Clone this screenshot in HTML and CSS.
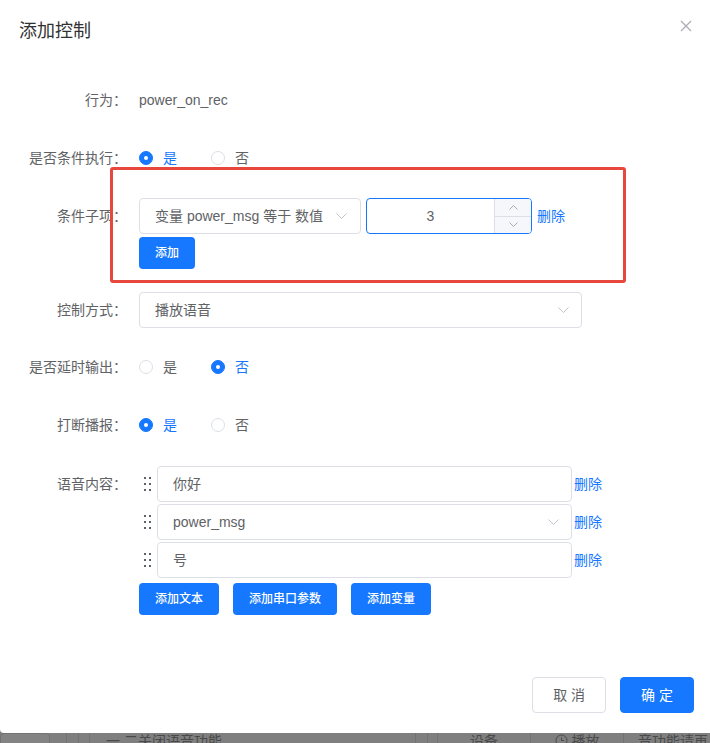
FILE: index.html
```html
<!DOCTYPE html>
<html lang="zh-CN">
<head>
<meta charset="utf-8">
<title>添加控制</title>
<link rel="stylesheet" href="styles.css">
</head>
<body>
<div class="dialog">
  <header class="dlg-header">
    <span class="dlg-title">添加控制</span>
    <span class="dlg-close">
      <svg width="12" height="12" viewBox="0 0 12 12"><path d="M1 1L11 11M11 1L1 11" stroke="#a8abb2" stroke-width="1.2" fill="none"/></svg>
    </span>
  </header>

  <div class="dlg-body">
    <div class="form-item">
      <label class="form-label">行为：</label>
      <div class="form-content"><span class="plain">power_on_rec</span></div>
    </div>

    <div class="form-item">
      <label class="form-label">是否条件执行：</label>
      <div class="radio-group">
        <span class="radio checked"><span class="radio-dot"></span><span class="radio-text">是</span></span>
        <span class="radio"><span class="radio-dot"></span><span class="radio-text">否</span></span>
      </div>
    </div>

    <div class="form-item item-cond">
      <label class="form-label">条件子项：</label>
      <div class="form-content">
        <div class="cond-line">
          <div class="select select-cond">变量 power_msg 等于 数值
            <svg class="select-arrow" width="11" height="6" viewBox="0 0 11 6"><path d="M0.5 0.5L5.5 5.5L10.5 0.5" stroke="#c0c4cc" stroke-width="1" fill="none"/></svg>
          </div>
          <div class="num">
            <span class="num-value">3</span>
            <span class="num-ctrl">
              <span class="num-up"><svg width="9" height="5" viewBox="0 0 9 5"><path d="M0.5 4.5L4.5 0.5L8.5 4.5" stroke="#a8abb2" stroke-width="1" fill="none"/></svg></span>
              <span class="num-down"><svg width="9" height="5" viewBox="0 0 9 5"><path d="M0.5 0.5L4.5 4.5L8.5 0.5" stroke="#a8abb2" stroke-width="1" fill="none"/></svg></span>
            </span>
          </div>
          <a class="link link-cond">删除</a>
        </div>
        <button class="btn-sm cond-add">添加</button>
      </div>
    </div>

    <div class="form-item item-mode">
      <label class="form-label">控制方式：</label>
      <div class="form-content">
        <div class="select select-wide">播放语音
          <svg class="select-arrow" width="11" height="6" viewBox="0 0 11 6"><path d="M0.5 0.5L5.5 5.5L10.5 0.5" stroke="#c0c4cc" stroke-width="1" fill="none"/></svg>
        </div>
      </div>
    </div>

    <div class="form-item">
      <label class="form-label">是否延时输出：</label>
      <div class="radio-group">
        <span class="radio"><span class="radio-dot"></span><span class="radio-text">是</span></span>
        <span class="radio checked"><span class="radio-dot"></span><span class="radio-text">否</span></span>
      </div>
    </div>

    <div class="form-item item-break">
      <label class="form-label">打断播报：</label>
      <div class="radio-group">
        <span class="radio checked"><span class="radio-dot"></span><span class="radio-text">是</span></span>
        <span class="radio"><span class="radio-dot"></span><span class="radio-text">否</span></span>
      </div>
    </div>

    <div class="form-item">
      <label class="form-label">语音内容：</label>
      <div class="form-content">
        <div class="voice-list">
          <div class="voice-row">
            <span class="handle"><svg width="7" height="14" viewBox="0 0 7 14"><g fill="#5f6266"><rect x="0" y="0" width="2" height="2"/><rect x="5" y="0" width="2" height="2"/><rect x="0" y="6" width="2" height="2"/><rect x="5" y="6" width="2" height="2"/><rect x="0" y="12" width="2" height="2"/><rect x="5" y="12" width="2" height="2"/></g></svg></span>
            <div class="voice-input">你好</div>
            <a class="link link-voice">删除</a>
          </div>
          <div class="voice-row">
            <span class="handle"><svg width="7" height="14" viewBox="0 0 7 14"><g fill="#5f6266"><rect x="0" y="0" width="2" height="2"/><rect x="5" y="0" width="2" height="2"/><rect x="0" y="6" width="2" height="2"/><rect x="5" y="6" width="2" height="2"/><rect x="0" y="12" width="2" height="2"/><rect x="5" y="12" width="2" height="2"/></g></svg></span>
            <div class="voice-input select">power_msg
              <svg class="select-arrow" width="11" height="6" viewBox="0 0 11 6"><path d="M0.5 0.5L5.5 5.5L10.5 0.5" stroke="#c0c4cc" stroke-width="1" fill="none"/></svg>
            </div>
            <a class="link link-voice">删除</a>
          </div>
          <div class="voice-row">
            <span class="handle"><svg width="7" height="14" viewBox="0 0 7 14"><g fill="#5f6266"><rect x="0" y="0" width="2" height="2"/><rect x="5" y="0" width="2" height="2"/><rect x="0" y="6" width="2" height="2"/><rect x="5" y="6" width="2" height="2"/><rect x="0" y="12" width="2" height="2"/><rect x="5" y="12" width="2" height="2"/></g></svg></span>
            <div class="voice-input">号</div>
            <a class="link link-voice">删除</a>
          </div>
        </div>
        <div class="voice-actions">
          <button class="btn-sm">添加文本</button>
          <button class="btn-sm">添加串口参数</button>
          <button class="btn-sm">添加变量</button>
        </div>
      </div>
    </div>
  </div>

  <footer class="dlg-footer">
    <button class="btn btn-default">取 消</button>
    <button class="btn btn-primary">确 定</button>
  </footer>

  <div class="annot-box"></div>
</div>

<div class="mask-strip">
  <div class="cell cell-a"><div class="ghost-box"></div></div>
  <div class="cell cell-b"></div>
  <div class="cell cell-c"></div>
  <div class="cell cell-d">一 二关闭语音功能</div>
  <div class="cell cell-e"></div>
  <div class="cell cell-f"></div>
  <div class="cell cell-g">设备</div>
  <div class="cell cell-h"><svg width="13" height="13" viewBox="0 0 13 13"><circle cx="6.5" cy="6.5" r="5.5" stroke="#4a4a4a" fill="none"/><path d="M6.5 3.5V6.5H9" stroke="#4a4a4a" fill="none"/></svg> 播放</div>
  <div class="cell cell-i">音功能请再</div>
</div>
</body>
</html>
```

FILE: styles.css
```css
* {
  box-sizing: border-box;
}

html,
body {
  margin: 0;
  padding: 0;
}

body {
  width: 710px;
  height: 743px;
  overflow: hidden;
  background: #7f7f7f;
  font-family: "Liberation Sans", "Noto Sans CJK SC", sans-serif;
}

.dialog {
  position: relative;
  width: 710px;
  height: 733px;
  background: #ffffff;
  border-bottom-left-radius: 4px;
  display: flex;
  flex-direction: column;
}

.dlg-header {
  display: flex;
  justify-content: space-between;
  align-items: flex-start;
  padding: 19px 18px 0 19px;
  height: 43px;
}

.dlg-title {
  font-size: 18px;
  line-height: 24px;
  color: #303133;
}

.dlg-close {
  display: block;
  width: 12px;
  height: 12px;
  margin-top: 1px;
}

.dlg-close svg {
  display: block;
}

.dlg-body {
  flex: 1;
  padding-top: 39px;
}

.form-item {
  display: flex;
  align-items: flex-start;
  margin-bottom: 22px;
}

.item-cond {
  margin-bottom: 23px;
}

.item-mode {
  margin-bottom: 21px;
}

.item-break {
  margin-bottom: 23px;
}

.form-label {
  flex: none;
  width: 139px;
  padding-right: 12px;
  text-align: right;
  font-size: 14px;
  line-height: 36px;
  color: #606266;
}

.form-content {
  font-size: 14px;
  line-height: 36px;
  color: #606266;
}

.plain {
  color: #606266;
}

/* radios */
.radio-group {
  display: flex;
  align-items: center;
  height: 36px;
}

.radio {
  display: flex;
  align-items: center;
  margin-right: 34px;
}

.radio-dot {
  position: relative;
  width: 14px;
  height: 14px;
  border: 1px solid #dcdfe6;
  border-radius: 50%;
  background: #ffffff;
  margin-right: 10px;
}

.radio.checked .radio-dot {
  background: #1677ff;
  border-color: #1677ff;
}

.radio.checked .radio-dot::after {
  content: "";
  position: absolute;
  left: 50%;
  top: 50%;
  width: 4px;
  height: 4px;
  margin: -2px 0 0 -2px;
  border-radius: 50%;
  background: #ffffff;
}

.radio-text {
  font-size: 14px;
  line-height: 20px;
  color: #606266;
}

.radio.checked .radio-text {
  color: #1677ff;
}

/* selects / inputs */
.select {
  position: relative;
  height: 36px;
  border: 1px solid #dcdfe6;
  border-radius: 4px;
  padding: 0 30px 0 15px;
  line-height: 34px;
  font-size: 14px;
  color: #606266;
  background: #ffffff;
}

.select-arrow {
  position: absolute;
  right: 12px;
  top: 50%;
  margin-top: -3px;
}

.select-cond {
  width: 222px;
}

.select-cond .select-arrow {
  right: 13px;
}

.select-wide {
  width: 443px;
}

.cond-line {
  display: flex;
  align-items: center;
}

.num {
  display: flex;
  margin-left: 5px;
  width: 166px;
  height: 36px;
  border: 1px solid #1677ff;
  border-radius: 4px;
  overflow: hidden;
}

.num-value {
  flex: 1;
  text-align: center;
  line-height: 34px;
  font-size: 14px;
  color: #606266;
}

.num-ctrl {
  width: 37px;
  display: flex;
  flex-direction: column;
  border-left: 1px solid #dcdfe6;
  background: #f5f7fa;
}

.num-up,
.num-down {
  flex: 1;
  display: flex;
  align-items: center;
  justify-content: center;
}

.num-up {
  border-bottom: 1px solid #dcdfe6;
}

.num-up svg,
.num-down svg {
  display: block;
}

.link {
  color: #1677ff;
  font-size: 14px;
  line-height: 20px;
  cursor: pointer;
}

.link-cond {
  margin-left: 5px;
}

.link-voice {
  margin-left: 2px;
}

.btn-sm {
  height: 32px;
  padding: 0 16px;
  border: none;
  border-radius: 4px;
  background: #1677ff;
  color: #ffffff;
  font-family: inherit;
  font-size: 12px;
  font-weight: 500;
  line-height: 32px;
  cursor: pointer;
}

.cond-add {
  display: block;
  margin-top: 3px;
}

/* voice content */
.voice-list {
  display: flex;
  flex-direction: column;
  gap: 2px;
}

.voice-row {
  display: flex;
  align-items: center;
}

.handle {
  flex: none;
  width: 18px;
  padding-left: 5px;
  display: flex;
  align-items: center;
}

.handle svg {
  display: block;
}

.voice-input {
  width: 415px;
  height: 36px;
  border: 1px solid #dcdfe6;
  border-radius: 4px;
  padding: 0 30px 0 15px;
  line-height: 34px;
  font-size: 14px;
  color: #606266;
  background: #ffffff;
}

.voice-actions {
  display: flex;
  gap: 14px;
  margin-top: 5px;
}

/* footer */
.dlg-footer {
  display: flex;
  justify-content: flex-end;
  gap: 14px;
  padding: 0 16px 20px;
}

.btn {
  height: 36px;
  padding: 0 20px;
  border-radius: 4px;
  font-family: inherit;
  font-size: 14px;
  line-height: 34px;
  cursor: pointer;
}

.btn-default {
  background: #ffffff;
  border: 1px solid #dcdfe6;
  color: #606266;
}

.btn-primary {
  background: #1677ff;
  border: 1px solid #1677ff;
  color: #ffffff;
}

/* red annotation frame drawn over the form */
.annot-box {
  position: absolute;
  left: 110px;
  top: 167px;
  width: 516px;
  height: 116px;
  border: 3px solid #e8473d;
  border-radius: 3px;
  pointer-events: none;
}

/* page content peeking below the dialog mask */
.mask-strip {
  display: flex;
  height: 10px;
  overflow: hidden;
  background: #7f7f7f;
}

.cell {
  flex: none;
  height: 20px;
  border-left: 1px solid #737373;
  font-size: 14px;
  line-height: 20px;
  color: #4a4a4a;
  margin-top: -2px;
  white-space: nowrap;
}

.cell-a {
  width: 66px;
  border-left: none;
  padding-top: 2px;
}

.ghost-box {
  width: 50px;
  height: 20px;
  border: 1px solid #737373;
  border-radius: 4px;
  background: #838383;
}

.cell-b { width: 12px; }
.cell-c { width: 11px; }

.cell-d {
  width: 326px;
  padding-left: 16px;
}

.cell-e { width: 12px; }
.cell-f { width: 10px; }

.cell-g {
  width: 93px;
  text-align: center;
}

.cell-h {
  width: 93px;
  text-align: center;
}

.cell-h svg {
  vertical-align: -1px;
}

.cell-i {
  width: 87px;
  padding-left: 14px;
}
```
